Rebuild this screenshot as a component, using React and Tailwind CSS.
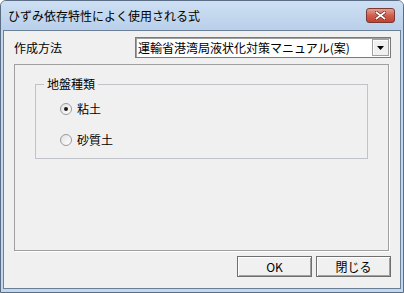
import { useState } from "react";

const font = { fontFamily: '"Noto Sans CJK JP", "Liberation Sans", sans-serif' };

const Radio = ({ label, checked, onClick }) => (
  <button type="button" onClick={onClick} className="flex items-center h-[16px] text-[12px] text-black">
    <span className="w-[12px] h-[12px] rounded-full border border-[#9a9a9a] bg-gradient-to-br from-[#e2e2e2] to-white flex items-center justify-center">
      {checked && <span className="w-[4px] h-[4px] rounded-full bg-[#1a1a1a]" />}
    </span>
    <span className="ml-[5px] leading-[16px]">{label}</span>
  </button>
);

const Button = ({ children }) => (
  <button
    type="button"
    className="w-[75px] h-[21px] bg-[#f0f0f0] border border-[#6f6f6f] shadow-[inset_1px_1px_0_#ffffff,inset_-1px_-1px_0_#a0a0a0] text-[12px] text-black leading-[16px]"
  >
    {children}
  </button>
);

export default function App() {
  const [soil, setSoil] = useState("clay");

  return (
    <div style={font} className="w-[404px] h-[293px] flex flex-col bg-[#c3d7ee] border border-[#5a6d84] rounded-t-[6px] overflow-hidden">
      <div className="h-[29px] shrink-0 flex items-center justify-between pl-[7px] pr-[8px] bg-gradient-to-b from-[#cddff3] to-[#b9d0ea]">
        <span className="text-[12px] text-black leading-[16px] pt-[1px]">ひずみ依存特性によく使用される式</span>
        <div className="w-[29px] h-[15px] mb-[1px] rounded-[3px] border border-[#7a3a33] bg-gradient-to-b from-[#e3a193] via-[#cf5f4f] to-[#c2412f] flex items-center justify-center">
          <svg width="11" height="9" viewBox="0 0 11 9">
            <path d="M1.5 1.5 L9.5 7.5 M9.5 1.5 L1.5 7.5" stroke="#5a1a12" strokeWidth="3" strokeLinecap="square" />
            <path d="M1.5 1.5 L9.5 7.5 M9.5 1.5 L1.5 7.5" stroke="#ffffff" strokeWidth="1.8" strokeLinecap="square" />
          </svg>
        </div>
      </div>

      <div className="flex-1 mx-[2px] mb-[3px] border border-[#6b7f96] bg-[#f0f0f0] flex flex-col">
        <div className="flex items-center justify-between pt-[6px] pl-[10px] pr-[9px]">
          <span className="text-[12px] text-black">作成方法</span>
          <div className="w-[256px] h-[21px] flex items-center bg-white border border-[#7a7a7a] shadow-[inset_1px_1px_0_#a0a0a0]">
            <span className="flex-1 pl-[2px] text-[12px] text-black leading-[16px] whitespace-nowrap">運輸省港湾局液状化対策マニュアル(案)</span>
            <span className="w-[17px] h-[17px] mr-[1px] bg-[#f0f0f0] border border-[#a0a0a0] shadow-[inset_1px_1px_0_#ffffff] flex items-center justify-center">
              <svg width="7" height="4" viewBox="0 0 7 4">
                <path d="M0 0 H7 L3.5 4 Z" fill="#000" />
              </svg>
            </span>
          </div>
        </div>

        <div className="mt-[6px] ml-[10px] mr-[11px] h-[187px] border border-[#a0a0a0] shadow-[1px_1px_0_#ffffff] pt-[12px] px-[20px]">
          <fieldset className="h-[82px] border border-[#c0c4c8] pl-[8px] pr-[8px]">
            <legend className="px-[3px] text-[12px] text-black leading-[14px]">地盤種類</legend>
            <div className="flex flex-col gap-[15px] pl-[16px] pt-[10px]">
              <Radio label="粘土" checked={soil === "clay"} onClick={() => setSoil("clay")} />
              <Radio label="砂質土" checked={soil === "sand"} onClick={() => setSoil("sand")} />
            </div>
          </fieldset>
        </div>

        <div className="flex justify-end gap-[4px] mt-[5px] pr-[9px]">
          <Button>OK</Button>
          <Button>閉じる</Button>
        </div>
      </div>
    </div>
  );
}
